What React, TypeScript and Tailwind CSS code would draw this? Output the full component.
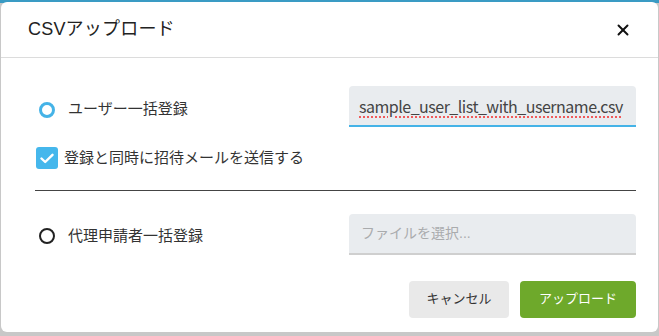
import { X } from "lucide-react";

const jp = "font-['Liberation_Sans','Noto_Sans_CJK_JP',sans-serif]";

export default function App() {
  return (
    <div
      className={`w-[659px] h-[336px] overflow-hidden bg-[linear-gradient(#3a9bc4_0_3px,#c8c8c8_3px)] pl-[1px] pt-[2px] ${jp}`}
    >
      <div className="w-[657px] h-[330px] bg-white rounded-[6px] flex flex-col">
        <div className="h-[56px] border-b border-[#dcdcdc] flex items-center justify-between pl-[27px] pr-[26px]">
          <h1 className="text-[18px] text-[#222] tracking-[0.2px]">CSVアップロード</h1>
          <X size={18} strokeWidth={2.6} className="text-[#111]" />
        </div>

        <div className="pl-[34px] pr-[22px] pt-[28px]">
          <div className="flex items-center justify-between">
            <label className="flex items-center gap-[13px] pl-[4px] pt-[6px]">
              <span className="w-[16px] h-[16px] rounded-full border-[3px] border-[#45b3e7] bg-white" />
              <span className="text-[15px] text-[#333]">ユーザー一括登録</span>
            </label>
            <div className="w-[287px] h-[41px] bg-[#e9ecef] rounded-t-[4px] border-b-2 border-[#45b3e7] flex items-center pl-[10px] overflow-hidden">
              <span className="text-[16px] text-[#444] whitespace-nowrap underline decoration-dotted decoration-[#f05a5a] decoration-2 underline-offset-[4px] font-['Noto_Sans_CJK_JP',sans-serif] tracking-[-0.5px]">
                sample_user_list_with_username.csv
              </span>
            </div>
          </div>

          <label className="flex items-center gap-[6px] mt-[20px] pl-[1px]">
            <span className="w-[22px] h-[22px] rounded-[3px] bg-[#45b7ec] flex items-center justify-center">
              <svg width="14" height="11" viewBox="0 0 14 11" fill="none">
                <path d="M1.5 5.5L5.2 9L12.5 1.8" stroke="white" strokeWidth="2.4" strokeLinecap="round" strokeLinejoin="round" />
              </svg>
            </span>
            <span className="text-[15px] text-[#333]">登録と同時に招待メールを送信する</span>
          </label>

          <hr className="mt-[20px] border-t border-[#444]" />

          <div className="flex items-center justify-between mt-[23px]">
            <label className="flex items-center gap-[13px] pl-[4px] pt-[4px]">
              <span className="w-[16px] h-[16px] rounded-full border-[2.5px] border-[#222] bg-white" />
              <span className="text-[15px] text-[#333]">代理申請者一括登録</span>
            </label>
            <div className="w-[287px] h-[41px] bg-[#e9ecef] rounded-t-[4px] border-b-2 border-[#cfcfcf] flex items-center pl-[12px]">
              <span className="text-[14px] text-[#a9abad]">ファイルを選択...</span>
            </div>
          </div>

          <div className="flex justify-end gap-[11px] mt-[26px]">
            <button className="w-[100px] h-[37px] rounded-[4px] bg-[#e9e9e9] text-[13px] text-[#333]">
              キャンセル
            </button>
            <button className="w-[116px] h-[37px] rounded-[4px] bg-[#6ea92b] text-[13px] text-white">
              アップロード
            </button>
          </div>
        </div>
      </div>
    </div>
  );
}
